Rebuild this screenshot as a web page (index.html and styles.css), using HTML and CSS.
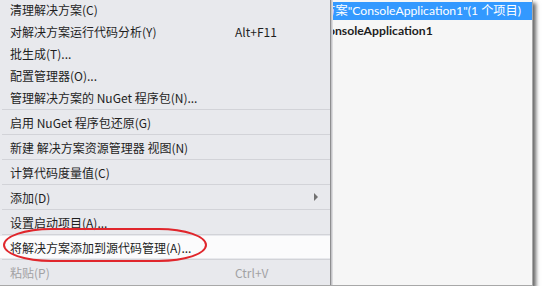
FILE: index.html
```html
<!DOCTYPE html>
<html lang="zh-CN">
<head>
    <meta charset="UTF-8">
    <title>解决方案右键菜单</title>
    <link rel="stylesheet" href="styles.css">
</head>
<body>

    <div class="shot">
        <div class="explorer">
            <div class="node selected">解决方案"ConsoleApplication1"(1 个项目)</div>
            <div class="node project">ConsoleApplication1</div>
        </div>

        <div class="menu">
            <div class="item"><span class="label">清理解决方案(C)</span></div>
            <div class="item"><span class="label">对解决方案运行代码分析(Y)</span><span class="key">Alt+F11</span></div>
            <div class="item"><span class="label">批生成(T)...</span></div>
            <div class="item"><span class="label">配置管理器(O)...</span></div>
            <div class="item"><span class="label">管理解决方案的 NuGet 程序包(N)...</span></div>
            <div class="sep"></div>
            <div class="item"><span class="label">启用 NuGet 程序包还原(G)</span></div>
            <div class="sep"></div>
            <div class="item"><span class="label">新建 解决方案资源管理器 视图(N)</span></div>
            <div class="sep"></div>
            <div class="item"><span class="label">计算代码度量值(C)</span></div>
            <div class="sep"></div>
            <div class="item"><span class="label">添加(D)</span><span class="arrow"></span></div>
            <div class="sep"></div>
            <div class="item"><span class="label">设置启动项目(A)...</span></div>
            <div class="sep"></div>
            <div class="item hover"><span class="label">将解决方案添加到源代码管理(A)...</span></div>
            <div class="sep"></div>
            <div class="item disabled"><span class="label">粘贴(P)</span><span class="key">Ctrl+V</span></div>
        </div>

        <div class="circle"></div>
    </div>

</body>
</html>
```

FILE: styles.css
```css
body {
    margin: 0;
    background: #ffffff;
    font-family: "Noto Sans CJK SC", "Noto Sans", sans-serif;
}
.shot {
    position: relative;
    width: 532px;
    height: 285px;
    overflow: hidden;
    background: #f6f6f6;
    border-right: 1px solid #a8a8a8;
    border-bottom: 1px solid #a8a8a8;
    box-shadow: 3px 3px 4px rgba(0, 0, 0, 0.6);
}
.explorer {
    padding-top: 2px;
    font-family: Lato, "Noto Sans CJK SC", sans-serif;
    font-size: 12.2px;
    color: #1e1e1e;
}
.node {
    height: 18px;
    line-height: 18px;
    white-space: nowrap;
    padding-left: 299px;
}
.node.selected {
    background: #3399ff;
    color: #ffffff;
}
.node.project {
    margin-top: 2px;
    font-weight: bold;
    padding-left: 320px;
}
.menu {
    position: absolute;
    left: 0;
    top: -2px;
    width: 330px;
    height: 287px;
    background: #e8e9ed;
    border-right: 1px solid #8e8e90;
    box-shadow: 1px 0 0 #c4c4c8, 2px 0 0 #dcdcde;
    font-size: 12px;
    color: #1e1e1e;
}
.item {
    position: relative;
    display: flex;
    align-items: center;
    height: 22px;
    padding-left: 10px;
}
.item .label {
    width: 225px;
}
.item.hover {
    background: #fbfbfc;
}
.item.disabled {
    color: #a2a2a4;
}
.sep {
    height: 1px;
    margin: 1px 0 1px 2px;
    background: #d2d3d8;
}
.arrow {
    position: absolute;
    left: 314px;
    top: 7px;
    border-left: 4px solid #717171;
    border-top: 4px solid transparent;
    border-bottom: 4px solid transparent;
}
.circle {
    position: absolute;
    left: 3px;
    top: 228px;
    width: 200px;
    height: 30px;
    border: 2px solid #e0262c;
    border-radius: 48px / 17px;
}
```
